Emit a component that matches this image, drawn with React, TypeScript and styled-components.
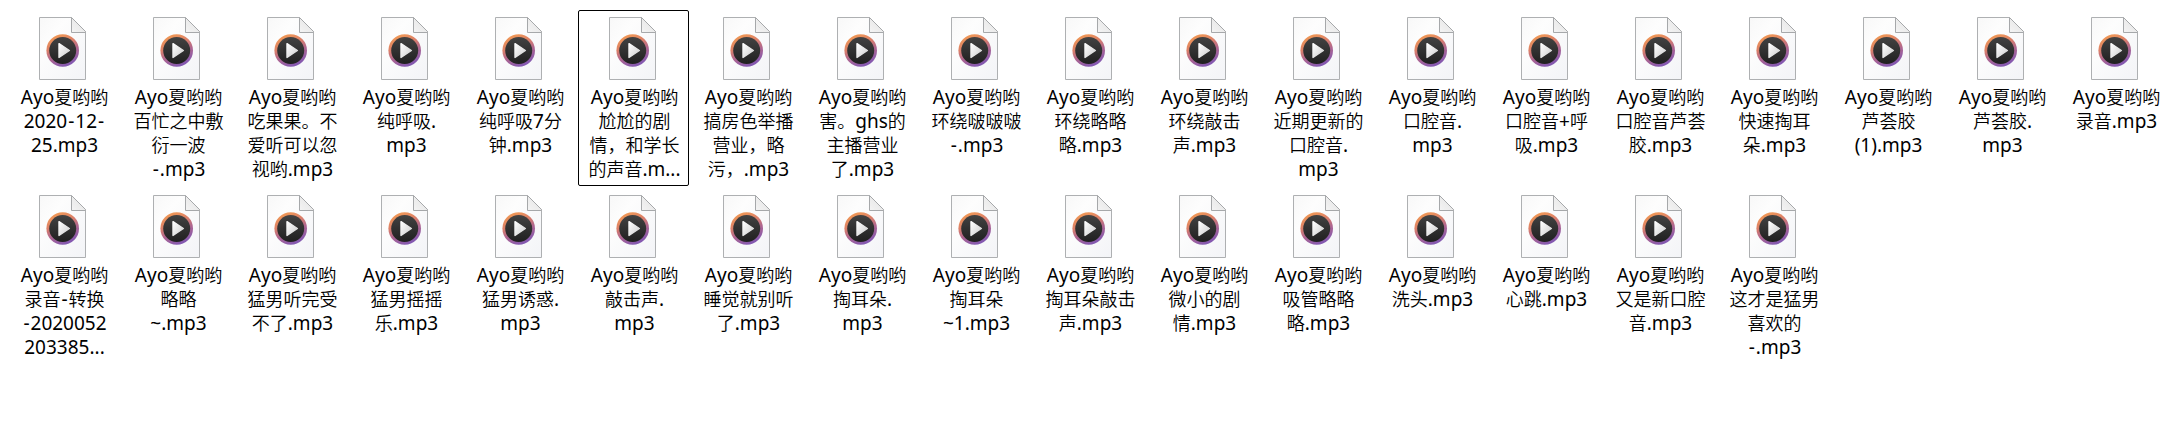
import React from 'react';
import styled, { createGlobalStyle } from 'styled-components';

const GlobalStyle = createGlobalStyle`
  body {
    margin: 0;
    background: #fff;
  }
`;

const FileGrid = styled.main`
  display: grid;
  grid-template-columns: repeat(19, 111px);
  grid-auto-rows: 176px;
  gap: 2px 3px;
  box-sizing: border-box;
  width: 2176px;
  height: 421px;
  padding: 10px 0 0 8px;
  overflow: hidden;
  background: #fff;
`;

const FileItem = styled.div<{ $focused?: boolean }>`
  display: flex;
  flex-direction: column;
  align-items: center;
  box-sizing: border-box;
  border: 1px solid ${({ $focused }) => ($focused ? '#000' : 'transparent')};
  border-radius: 2px;
  padding-top: 6px;
`;

const PageIcon = styled.svg`
  display: block;
  flex: none;
  width: 49px;
  height: 65px;
  margin-right: 2px;
`;

const FileName = styled.div`
  margin-top: 2px;
  padding-left: 2px;
  text-align: center;
`;

const NameLine = styled.div`
  height: 24px;
  font: 350 18px/24px 'Noto Sans CJK SC', sans-serif;
  color: #000;
  white-space: nowrap;
`;

const Latin = styled.span<{ $hyphen: boolean }>`
  padding: 0 ${({ $hyphen }) => ($hyphen ? '1px' : '0')};
  font: 400 19px/24px 'Noto Sans', sans-serif;
`;

const files: string[][] = [
  ['2020-12-', '25.mp3'],
  ['百忙之中敷', '衍一波', '-.mp3'],
  ['吃果果。不', '爱听可以忽', '视哟.mp3'],
  ['纯呼吸.', 'mp3'],
  ['纯呼吸7分', '钟.mp3'],
  ['尬尬的剧', '情，和学长', '的声音.m...'],
  ['搞房色举播', '营业，略', '污，.mp3'],
  ['害。ghs的', '主播营业', '了.mp3'],
  ['环绕啵啵啵', '-.mp3'],
  ['环绕略略', '略.mp3'],
  ['环绕敲击', '声.mp3'],
  ['近期更新的', '口腔音.', 'mp3'],
  ['口腔音.', 'mp3'],
  ['口腔音+呼', '吸.mp3'],
  ['口腔音芦荟', '胶.mp3'],
  ['快速掏耳', '朵.mp3'],
  ['芦荟胶', '(1).mp3'],
  ['芦荟胶.', 'mp3'],
  ['录音.mp3'],
  ['录音-转换', '-2020052', '203385...'],
  ['略略', '~.mp3'],
  ['猛男听完受', '不了.mp3'],
  ['猛男摇摇', '乐.mp3'],
  ['猛男诱惑.', 'mp3'],
  ['敲击声.', 'mp3'],
  ['睡觉就别听', '了.mp3'],
  ['掏耳朵.', 'mp3'],
  ['掏耳朵', '~1.mp3'],
  ['掏耳朵敲击', '声.mp3'],
  ['微小的剧', '情.mp3'],
  ['吸管略略', '略.mp3'],
  ['洗头.mp3'],
  ['心跳.mp3'],
  ['又是新口腔', '音.mp3'],
  ['这才是猛男', '喜欢的', '-.mp3'],
];

const FOCUSED_INDEX = 5;

const Defs = styled.svg`
  display: block;
  width: 0;
  height: 0;
`;

function Gradients() {
  return (
    <Defs aria-hidden="true">
      <defs>
        <linearGradient id="paper" x1="0" y1="0" x2="1" y2="1">
          <stop offset="0" stopColor="#f8f8f8" />
          <stop offset="0.3" stopColor="#fdfdfd" />
          <stop offset="1" stopColor="#f3f4f7" />
        </linearGradient>
        <linearGradient id="fold" x1="0" y1="1" x2="1" y2="0">
          <stop offset="0" stopColor="#f4f4f4" />
          <stop offset="1" stopColor="#e2e2e2" />
        </linearGradient>
        <linearGradient id="ring" gradientUnits="userSpaceOnUse" x1="18" y1="19" x2="31" y2="49">
          <stop offset="0" stopColor="#ee9656" />
          <stop offset="0.3" stopColor="#dc8068" />
          <stop offset="0.6" stopColor="#ad6591" />
          <stop offset="1" stopColor="#7f57b4" />
        </linearGradient>
        <linearGradient id="disc" x1="0" y1="0" x2="0" y2="1">
          <stop offset="0" stopColor="#424242" />
          <stop offset="1" stopColor="#202020" />
        </linearGradient>
        <linearGradient id="play" x1="0" y1="0" x2="1" y2="1">
          <stop offset="0" stopColor="#ffffff" />
          <stop offset="1" stopColor="#cfcfcf" />
        </linearGradient>
      </defs>
    </Defs>
  );
}

function AudioFileIcon() {
  return (
    <PageIcon viewBox="0 0 49 65">
      <path d="M1.5.5H33.5L47.5 14.5V62.5H1.5Z" fill="url(#paper)" stroke="#aeb0b2" />
      <path d="M33.5.5V15.5H47.5V14.5Z" fill="url(#fold)" stroke="#a6a8aa" strokeLinejoin="round" />
      <circle cx="24.7" cy="33.5" r="16.3" fill="url(#ring)" />
      <circle cx="24.7" cy="33.5" r="13.5" fill="url(#disc)" />
      <path d="M21 26.6 31.4 33.5 21 40.4Z" fill="url(#play)" stroke="url(#play)" strokeWidth="1.4" strokeLinejoin="round" />
    </PageIcon>
  );
}

function Line({ text }: { text: string }) {
  const runs = text.match(/-|[\x20-\x2c\x2e-\x7e]+|[^\x20-\x7e]+/g) ?? [];
  return (
    <NameLine>
      {runs.map((run, i) =>
        /^[\x20-\x7e]/.test(run) ? (
          <Latin key={i} $hyphen={run === '-'}>
            {run}
          </Latin>
        ) : (
          run
        ),
      )}
    </NameLine>
  );
}

export default function App() {
  return (
    <>
      <GlobalStyle />
      <FileGrid>
        {files.map((lines, index) => (
          <FileItem key={index} $focused={index === FOCUSED_INDEX}>
            <AudioFileIcon />
            <FileName>
              {['Ayo夏哟哟', ...lines].map((line, i) => (
                <Line key={i} text={line} />
              ))}
            </FileName>
          </FileItem>
        ))}
      </FileGrid>
      <Gradients />
    </>
  );
}
